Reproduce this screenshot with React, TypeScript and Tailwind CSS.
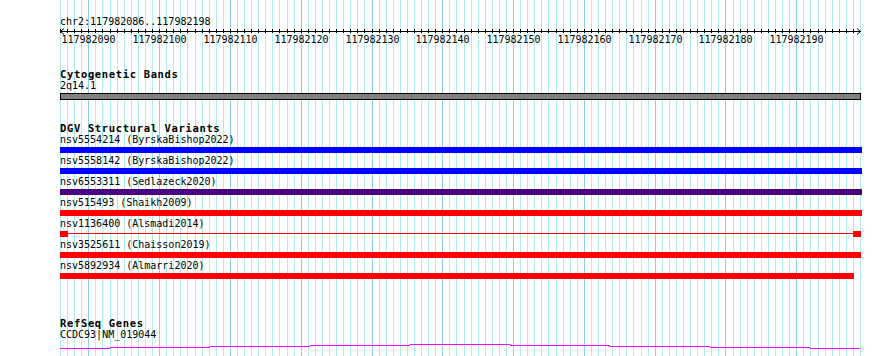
const START = 117982086;
const BASES = 113;
const px = (k: number) => Math.round(60 + (k * 800) / BASES);

function Grid() {
  const lines = [];
  for (let k = 0; k <= BASES; k++) {
    const major = (START + k) % 10 === 0;
    lines.push(
      <line
        key={k}
        x1={px(k) + 0.5}
        x2={px(k) + 0.5}
        y1={0}
        y2={356}
        stroke={major ? "#87cefa" : "#aeeeee"}
        strokeWidth={1}
      />
    );
  }
  return (
    <svg className="absolute inset-0" width={890} height={356}>
      {lines}
    </svg>
  );
}

function Ruler() {
  const ticks = [];
  const labels = [];
  for (let k = 0; k < BASES; k++) {
    const x = px(k) - 60 + 0.5;
    ticks.push(<line key={k} x1={x} x2={x} y1={1} y2={5} stroke="#000" />);
    if ((START + k) % 10 === 0) {
      labels.push(
        <text key={k} x={x} y={15} textAnchor="middle" fontSize={10} fontFamily="DejaVu Sans Mono, monospace" fill="#000">
          {START + k}
        </text>
      );
    }
  }
  return (
    <svg width={830} height={19} className="overflow-visible">
      <line x1={0} x2={801} y1={3.5} y2={3.5} stroke="#000" />
      <polyline points="4,0.5 0.5,3.5 4,6.5" fill="none" stroke="#000" />
      <polyline points="797,0.5 800.5,3.5 797,6.5" fill="none" stroke="#000" />
      {ticks}
      {labels}
    </svg>
  );
}

function TrackTitle({ children, className }: { children: string; className: string }) {
  return <div className={`text-[10.5px] font-bold tracking-[0.65px] ${className}`}>{children}</div>;
}

const variants = [
  { label: "nsv5554214 (ByrskaBishop2022)", bar: "w-[802px] bg-[#0000ff]" },
  { label: "nsv5558142 (ByrskaBishop2022)", bar: "w-[802px] bg-[#0000ff]" },
  { label: "nsv6553311 (Sedlazeck2020)", bar: "w-[802px] bg-[#4b0082]" },
  { label: "nsv515493 (Shaikh2009)", bar: "w-[802px] bg-[#ff0000]" },
  { label: "nsv1136400 (Alsmadi2014)", bar: "split" },
  { label: "nsv3525611 (Chaisson2019)", bar: "w-[801px] bg-[#ff0000]" },
  { label: "nsv5892934 (Almarri2020)", bar: "w-[794px] bg-[#ff0000]" },
];

export default function App() {
  return (
    <div className="relative w-[890px] h-[356px] overflow-hidden bg-white font-['DejaVu_Sans_Mono',monospace] text-[10px] leading-[12px] text-black">
      <Grid />
      <div className="relative flex flex-col pl-[60px] pt-[16px]">
        <div>chr2:117982086..117982198</div>
        <Ruler />

        <TrackTitle className="mt-[21px]">Cytogenetic Bands</TrackTitle>
        <div>2q14.1</div>
        <div className="mt-px h-[7px] w-[801px] border border-black bg-[#808080]" />

        <TrackTitle className="mt-[22px]">DGV Structural Variants</TrackTitle>
        {variants.map((v) => (
          <div key={v.label} className="flex flex-col">
            <div>{v.label}</div>
            {v.bar === "split" ? (
              <div className="mt-px mb-[2px] flex w-[801px] items-start">
                <div className="h-[6px] w-[8px] bg-[#ff0000]" />
                <div className="mt-[2px] h-px flex-1 bg-[#ff0000]" />
                <div className="h-[6px] w-[8px] bg-[#ff0000]" />
              </div>
            ) : (
              <div className={`mt-px mb-[2px] h-[6px] ${v.bar}`} />
            )}
          </div>
        ))}

        <TrackTitle className="mt-[36px]">RefSeq Genes</TrackTitle>
        <div>CCDC93|NM_019044</div>
        <svg width={810} height={8} className="mt-[2px] overflow-visible">
          <g fill="#ff00ff">
            <rect x={0} y={5} width={50} height={1} />
            <rect x={50} y={4} width={100} height={1} />
            <rect x={150} y={3} width={100} height={1} />
            <rect x={250} y={2} width={100} height={1} />
            <rect x={350} y={1} width={100} height={1} />
            <rect x={450} y={2} width={100} height={1} />
            <rect x={550} y={3} width={100} height={1} />
            <rect x={650} y={4} width={100} height={1} />
            <rect x={750} y={5} width={50} height={1} />
          </g>
        </svg>
      </div>
    </div>
  );
}
